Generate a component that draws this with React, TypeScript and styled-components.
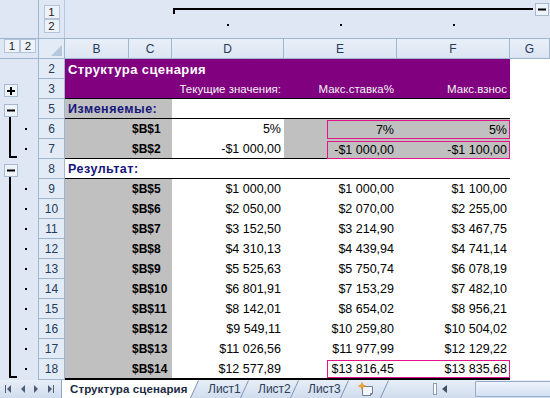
import React from "react";
import styled, { createGlobalStyle } from "styled-components";

const COLS = "39px 26px 64px 43px 112px 113px 113px 40px";
const LINE = "#9eb6ce";
const PANE = "#dee7f3";
const HEAD = "#e3ebf6";
const GRAY = "#c0c0c0";
const PURPLE = "#800080";
const PINK = "#e3148a";
const NAVY = "#16167c";

type Rule = "none" | "thin" | "thick";
type Line = "none" | "start" | "mid" | "end";

interface SheetRow {
  n: number;
  name: string;
  d: string;
  e: string;
  f: string;
  grayEF?: boolean;
  pink?: boolean;
  rule?: Rule;
  line: Line;
}

const changing: SheetRow[] = [
  { n: 6, name: "$B$1", d: "5%", e: "7%", f: "5%", grayEF: true, pink: true, line: "mid" },
  { n: 7, name: "$B$2", d: "-$1 000,00", e: "-$1 000,00", f: "-$1 100,00", grayEF: true, pink: true, rule: "thin", line: "end" },
];

const results: SheetRow[] = [
  { n: 9, name: "$B$5", d: "$1 000,00", e: "$1 000,00", f: "$1 100,00", line: "mid" },
  { n: 10, name: "$B$6", d: "$2 050,00", e: "$2 070,00", f: "$2 255,00", line: "mid" },
  { n: 11, name: "$B$7", d: "$3 152,50", e: "$3 214,90", f: "$3 467,75", line: "mid" },
  { n: 12, name: "$B$8", d: "$4 310,13", e: "$4 439,94", f: "$4 741,14", line: "mid" },
  { n: 13, name: "$B$9", d: "$5 525,63", e: "$5 750,74", f: "$6 078,19", line: "mid" },
  { n: 14, name: "$B$10", d: "$6 801,91", e: "$7 153,29", f: "$7 482,10", line: "mid" },
  { n: 15, name: "$B$11", d: "$8 142,01", e: "$8 654,02", f: "$8 956,21", line: "mid" },
  { n: 16, name: "$B$12", d: "$9 549,11", e: "$10 259,80", f: "$10 504,02", line: "mid" },
  { n: 17, name: "$B$13", d: "$11 026,56", e: "$11 977,99", f: "$12 129,22", line: "mid" },
  { n: 18, name: "$B$14", d: "$12 577,89", e: "$13 816,45", f: "$13 835,68", pink: true, rule: "thick", line: "end" },
];

const GlobalStyle = createGlobalStyle`
  html, body { margin: 0; padding: 0; background: #fff; }
  body {
    width: 550px;
    height: 398px;
    overflow: hidden;
    font-family: "Liberation Sans", Arial, sans-serif;
  }
`;

const Sheet = styled.div`
  width: 550px;
  height: 398px;
  display: flex;
  flex-direction: column;
  overflow: hidden;
  background: #fff;
`;

const TopArea = styled.div`
  flex: none;
  display: grid;
  grid-template-columns: ${COLS};
  height: 39px;
  box-sizing: border-box;
  background: ${PANE};
  border-bottom: 1px solid ${LINE};
`;

const PaneCorner = styled.div`
  border-right: 1px solid ${LINE};
`;

const LevelStack = styled.div`
  display: flex;
  flex-direction: column;
  align-items: center;
  padding-top: 5px;
  border-right: 1px solid #b9c9dd;
`;

const LevelButton = styled.div`
  width: 16px;
  height: 14px;
  box-sizing: border-box;
  display: flex;
  align-items: center;
  justify-content: center;
  background: #eef3fa;
  border: 1px solid #b3c4da;
  font-size: 11.5px;
  color: #1d1d1d;
`;

const ColumnOutline = styled.div`
  grid-column: 3 / -1;
  display: grid;
  grid-template-columns: 64px 43px 112px 113px 113px 40px;
  grid-template-rows: 19px 19px;
`;

const ColumnBracketRow = styled.div`
  grid-column: 3 / -1;
  grid-row: 1;
  display: flex;
  align-items: flex-start;
  padding: 0 1px;
`;

const Bracket = styled.div`
  flex: 1;
  height: 6px;
  margin-top: 8px;
  box-sizing: border-box;
  border-top: 2px solid #000;
  border-left: 2px solid #000;
`;

const ToggleButton = styled.div<{ $mt?: number }>`
  width: 14px;
  height: 13px;
  box-sizing: border-box;
  margin-top: ${(p) => p.$mt ?? 0}px;
  display: flex;
  align-items: center;
  justify-content: center;
  background: #eef3fa;
  border: 1px solid #a7bad3;
`;

const DotSlot = styled.div<{ $col: number }>`
  grid-column: ${(p) => p.$col};
  grid-row: 2;
  display: flex;
  justify-content: center;
  padding-top: 5px;
`;

const Dot = styled.div`
  width: 2px;
  height: 2px;
  background: #000;
`;

const HeaderRow = styled.div`
  flex: none;
  display: grid;
  grid-template-columns: ${COLS};
  height: 20px;
  box-sizing: border-box;
  border-bottom: 1px solid ${LINE};
`;

const RowLevels = styled.div`
  display: flex;
  align-items: flex-start;
  padding: 0 0 0 4px;
  background: ${PANE};
  border-right: 1px solid ${LINE};
`;

const SelectAll = styled.div`
  display: flex;
  align-items: flex-end;
  justify-content: flex-end;
  padding: 0 2px 2px 0;
  background: ${HEAD};
  border-right: 1px solid ${LINE};
`;

const ColHeader = styled.div`
  display: flex;
  align-items: center;
  justify-content: center;
  background: linear-gradient(#e8eff8, #dbe5f2);
  border-right: 1px solid ${LINE};
  font-size: 12px;
  color: #243b5a;
`;

const DataRow = styled.div<{ $tall?: boolean }>`
  flex: none;
  display: grid;
  grid-template-columns: ${COLS};
  height: ${(p) => (p.$tall ? 21 : 20)}px;
`;

const OutlineCell = styled.div`
  display: grid;
  background: ${PANE};
  border-right: 1px solid ${LINE};
  & > * {
    grid-area: 1 / 1;
  }
`;

const RowNum = styled.div`
  display: flex;
  align-items: center;
  justify-content: center;
  box-sizing: border-box;
  background: ${HEAD};
  border-right: 1px solid ${LINE};
  border-bottom: 1px solid ${LINE};
  font-size: 12px;
  color: #243b5a;
`;

const Cell = styled.div<{ $col: string; $bg?: string; $rule?: Rule; $right?: boolean }>`
  grid-column: ${(p) => p.$col};
  display: flex;
  align-items: center;
  justify-content: ${(p) => (p.$right ? "flex-end" : "flex-start")};
  box-sizing: border-box;
  min-width: 0;
  white-space: nowrap;
  background: ${(p) => p.$bg ?? "#fff"};
  border-bottom: ${(p) =>
    p.$rule === "thick" ? "2px solid #000" : p.$rule === "thin" ? "1px solid #000" : "none"};
`;

const Title = styled.span`
  padding-left: 3px;
  font-size: 13px;
  font-weight: bold;
  letter-spacing: 0.4px;
  color: #fff;
`;

const HeadText = styled.span`
  padding-right: 3px;
  font-size: 11.5px;
  color: #f4f4f4;
`;

const SectionLabel = styled.span`
  padding-left: 3px;
  font-size: 12.5px;
  font-weight: bold;
  letter-spacing: 0.5px;
  color: ${NAVY};
`;

const Name = styled.span`
  padding-left: 3px;
  font-size: 12px;
  font-weight: bold;
  color: #000;
`;

const Value = styled.span`
  padding-right: 3px;
  font-size: 12.5px;
  color: #000;
`;

const HighlightSpan = styled.div<{ $bg: string; $rule?: Rule }>`
  grid-column: 6 / 8;
  display: flex;
  box-sizing: border-box;
  background: ${(p) => p.$bg};
  border-bottom: ${(p) => (p.$rule === "thick" ? "2px solid #000" : "none")};
`;

const Lead = styled.div<{ $rule?: Rule }>`
  width: 43px;
  flex: none;
  box-sizing: border-box;
  border-bottom: ${(p) => (p.$rule === "thin" ? "1px solid #000" : "none")};
`;

const PinkBox = styled.div<{ $mt: number }>`
  flex: 1;
  margin-top: ${(p) => p.$mt}px;
  box-sizing: border-box;
  border: 1px solid ${PINK};
  display: grid;
  grid-template-columns: 69px 1fr;
  align-items: center;
  text-align: right;
  & > span:last-child {
    padding-right: 2px;
  }
`;

const TabBar = styled.div`
  flex: none;
  height: 18px;
  display: flex;
  align-items: stretch;
  background: linear-gradient(#e7eef8, #d0dcee);
  font-size: 12px;
  color: #1f2f45;
`;

const NavGroup = styled.div`
  width: 61px;
  flex: none;
  display: flex;
  align-items: center;
  justify-content: space-between;
  box-sizing: border-box;
  padding: 0 7px 0 5px;
`;

const Tab = styled.div<{ $active?: boolean; $width: number }>`
  width: ${(p) => p.$width}px;
  flex: none;
  box-sizing: border-box;
  display: flex;
  align-items: center;
  padding-left: ${(p) => (p.$active ? 8 : 9)}px;
  background: ${(p) => (p.$active ? "#fff" : "transparent")};
  font-size: ${(p) => (p.$active ? 11.5 : 12)}px;
  font-weight: ${(p) => (p.$active ? "bold" : "normal")};
  letter-spacing: ${(p) => (p.$active ? "0.1px" : "0")};
  color: ${(p) => (p.$active ? "#1b2a3f" : "#2c3d55")};
  border-left: ${(p) => (p.$active ? "1px solid #8ea4c2" : "none")};
  white-space: nowrap;
  overflow: visible;
`;

const ScrollZone = styled.div`
  margin-left: auto;
  width: 119px;
  flex: none;
  display: flex;
  align-items: center;
`;

const Splitter = styled.div`
  width: 4px;
  height: 12px;
  margin-left: 2px;
  box-sizing: border-box;
  background: #fff;
  border: 1px solid #8b9cb6;
`;

const ArrowSlot = styled.div`
  width: 38px;
  display: flex;
  padding-left: 5px;
  box-sizing: border-box;
`;

const Thumb = styled.div`
  flex: 1;
  align-self: stretch;
  margin: 1px 0 1px;
  box-sizing: border-box;
  border: 1px solid #97abc8;
  border-right: none;
  border-radius: 2px 0 0 2px;
  background: linear-gradient(#eef4fb, #d2e0f1);
`;

const Slant = ({ fill }: { fill?: string }) => (
  <svg width="9" height="18" viewBox="0 0 9 18" style={{ flex: "none" }}>
    {fill && <polygon points="0,0 8.5,0 0,18" fill={fill} />}
    <line x1="0.5" y1="18" x2="8.5" y2="0.5" stroke="#7f95b3" strokeWidth="1" />
  </svg>
);

const Minus = () => (
  <svg width="8" height="3" viewBox="0 0 8 3">
    <rect x="0" y="0.5" width="8" height="2" fill="#000" />
  </svg>
);

const Plus = () => (
  <svg width="8" height="8" viewBox="0 0 8 8">
    <rect x="0" y="3" width="8" height="2" fill="#000" />
    <rect x="3" y="0" width="2" height="8" fill="#000" />
  </svg>
);

const OutlineLines = ({ line, dot }: { line: Line; dot?: boolean }) => (
  <svg width="38" height="20" viewBox="0 0 38 20">
    {line === "start" && <rect x="9" y="18" width="2" height="2" fill="#000" />}
    {line === "mid" && <rect x="9" y="0" width="2" height="20" fill="#000" />}
    {line === "end" && (
      <>
        <rect x="9" y="0" width="2" height="19" fill="#000" />
        <rect x="9" y="17" width="8" height="2" fill="#000" />
      </>
    )}
    {dot && <rect x="25" y="9" width="2" height="2" fill="#000" />}
  </svg>
);

const NavIcon = ({ dir, end }: { dir: "l" | "r"; end?: boolean }) => (
  <svg width="7" height="8" viewBox="0 0 7 8">
    {dir === "l" ? (
      <>
        {end && <rect x="0" y="0" width="1" height="8" fill="#4e5d74" />}
        <polygon points="6,0 6,8 2,4" fill="#4e5d74" />
      </>
    ) : (
      <>
        <polygon points="1,0 1,8 5,4" fill="#4e5d74" />
        {end && <rect x="6" y="0" width="1" height="8" fill="#4e5d74" />}
      </>
    )}
  </svg>
);

const InsertSheetIcon = () => (
  <svg width="18" height="14" viewBox="0 0 18 14">
    <path d="M4.5 4.5 H14.5 V11.5 L12.5 13.5 H4.5 Z" fill="#f4f7fb" stroke="#6d7f99" />
    <path d="M12.5 13.5 V11.5 H14.5" fill="none" stroke="#6d7f99" />
    <path d="M4 0.5 L5 3 L7.5 4 L5 5 L4 7.5 L3 5 L0.5 4 L3 3 Z" fill="#f3a826" stroke="#d47c10" strokeWidth="0.5" />
  </svg>
);

const ValueRow = ({ r }: { r: SheetRow }) => (
  <DataRow $tall={r.rule === "thick"}>
    <OutlineCell>
      <OutlineLines line={r.line} dot />
    </OutlineCell>
    <RowNum>{r.n}</RowNum>
    <Cell $col="3" $bg={GRAY} $rule={r.rule} />
    <Cell $col="4" $bg={GRAY} $rule={r.rule}>
      <Name>{r.name}</Name>
    </Cell>
    <Cell $col="5" $rule={r.rule} $right>
      <Value>{r.d}</Value>
    </Cell>
    {r.pink ? (
      <HighlightSpan $bg={r.grayEF ? GRAY : "#fff"} $rule={r.rule}>
        <Lead $rule={r.rule} />
        <PinkBox $mt={r.n === 7 ? 2 : 1}>
          <Value>{r.e}</Value>
          <Value>{r.f}</Value>
        </PinkBox>
      </HighlightSpan>
    ) : (
      <>
        <Cell $col="6" $rule={r.rule} $right>
          <Value>{r.e}</Value>
        </Cell>
        <Cell $col="7" $rule={r.rule} $right>
          <Value>{r.f}</Value>
        </Cell>
      </>
    )}
  </DataRow>
);

export default function App() {
  return (
    <>
      <GlobalStyle />
      <Sheet>
        <TopArea>
          <PaneCorner />
          <LevelStack>
            <LevelButton>1</LevelButton>
            <LevelButton>2</LevelButton>
          </LevelStack>
          <ColumnOutline>
            <ColumnBracketRow>
              <Bracket />
              <ToggleButton $mt={3} style={{ marginLeft: 2 }}>
                <Minus />
              </ToggleButton>
            </ColumnBracketRow>
            <DotSlot $col={3}>
              <Dot />
            </DotSlot>
            <DotSlot $col={4}>
              <Dot />
            </DotSlot>
            <DotSlot $col={5}>
              <Dot />
            </DotSlot>
          </ColumnOutline>
        </TopArea>

        <HeaderRow>
          <RowLevels>
            <LevelButton>1</LevelButton>
            <LevelButton>2</LevelButton>
          </RowLevels>
          <SelectAll>
            <svg width="11" height="11" viewBox="0 0 11 11">
              <polygon points="11,0 11,11 0,11" fill="#b5c7dd" />
            </svg>
          </SelectAll>
          {["B", "C", "D", "E", "F", "G"].map((c) => (
            <ColHeader key={c}>{c}</ColHeader>
          ))}
        </HeaderRow>

        <DataRow>
          <OutlineCell />
          <RowNum>2</RowNum>
          <Cell $col="3 / 8" $bg={PURPLE}>
            <Title>Структура сценария</Title>
          </Cell>
        </DataRow>

        <DataRow>
          <OutlineCell>
            <ToggleButton style={{ alignSelf: "end", marginBottom: 2, marginLeft: 4 }}>
              <Plus />
            </ToggleButton>
          </OutlineCell>
          <RowNum>3</RowNum>
          <Cell $col="3 / 5" $bg={PURPLE} $rule="thin" />
          <Cell $col="5" $bg={PURPLE} $rule="thin" $right>
            <HeadText>Текущие значения:</HeadText>
          </Cell>
          <Cell $col="6" $bg={PURPLE} $rule="thin" $right>
            <HeadText>Макс.ставка%</HeadText>
          </Cell>
          <Cell $col="7" $bg={PURPLE} $rule="thin" $right>
            <HeadText>Макс.взнос</HeadText>
          </Cell>
        </DataRow>

        <DataRow>
          <OutlineCell>
            <OutlineLines line="start" />
            <ToggleButton style={{ alignSelf: "end", marginBottom: 2, marginLeft: 4 }}>
              <Minus />
            </ToggleButton>
          </OutlineCell>
          <RowNum>5</RowNum>
          <Cell $col="3 / 5" $bg={GRAY} $rule="thin">
            <SectionLabel>Изменяемые:</SectionLabel>
          </Cell>
          <Cell $col="5 / 8" $rule="thin" />
        </DataRow>

        {changing.map((r) => (
          <ValueRow key={r.n} r={r} />
        ))}

        <DataRow>
          <OutlineCell>
            <OutlineLines line="start" />
            <ToggleButton style={{ alignSelf: "end", marginBottom: 2, marginLeft: 4 }}>
              <Minus />
            </ToggleButton>
          </OutlineCell>
          <RowNum>8</RowNum>
          <Cell $col="3 / 8" $rule="thin">
            <SectionLabel>Результат:</SectionLabel>
          </Cell>
        </DataRow>

        {results.map((r) => (
          <ValueRow key={r.n} r={r} />
        ))}

        <TabBar>
          <NavGroup>
            <NavIcon dir="l" end />
            <NavIcon dir="l" />
            <NavIcon dir="r" />
            <NavIcon dir="r" end />
          </NavGroup>
          <Tab $active $width={129}>
            Структура сценария
          </Tab>
          <Slant fill="#fff" />
          <Tab $width={41}>Лист1</Tab>
          <Slant />
          <Tab $width={41}>Лист2</Tab>
          <Slant />
          <Tab $width={41}>Лист3</Tab>
          <Slant />
          <Tab $width={31}>
            <InsertSheetIcon />
          </Tab>
          <Slant />
          <ScrollZone>
            <Splitter />
            <ArrowSlot>
              <svg width="5" height="8" viewBox="0 0 5 8">
                <polygon points="5,0 5,8 0,4" fill="#3f4d63" />
              </svg>
            </ArrowSlot>
            <Thumb />
          </ScrollZone>
        </TabBar>
      </Sheet>
    </>
  );
}
